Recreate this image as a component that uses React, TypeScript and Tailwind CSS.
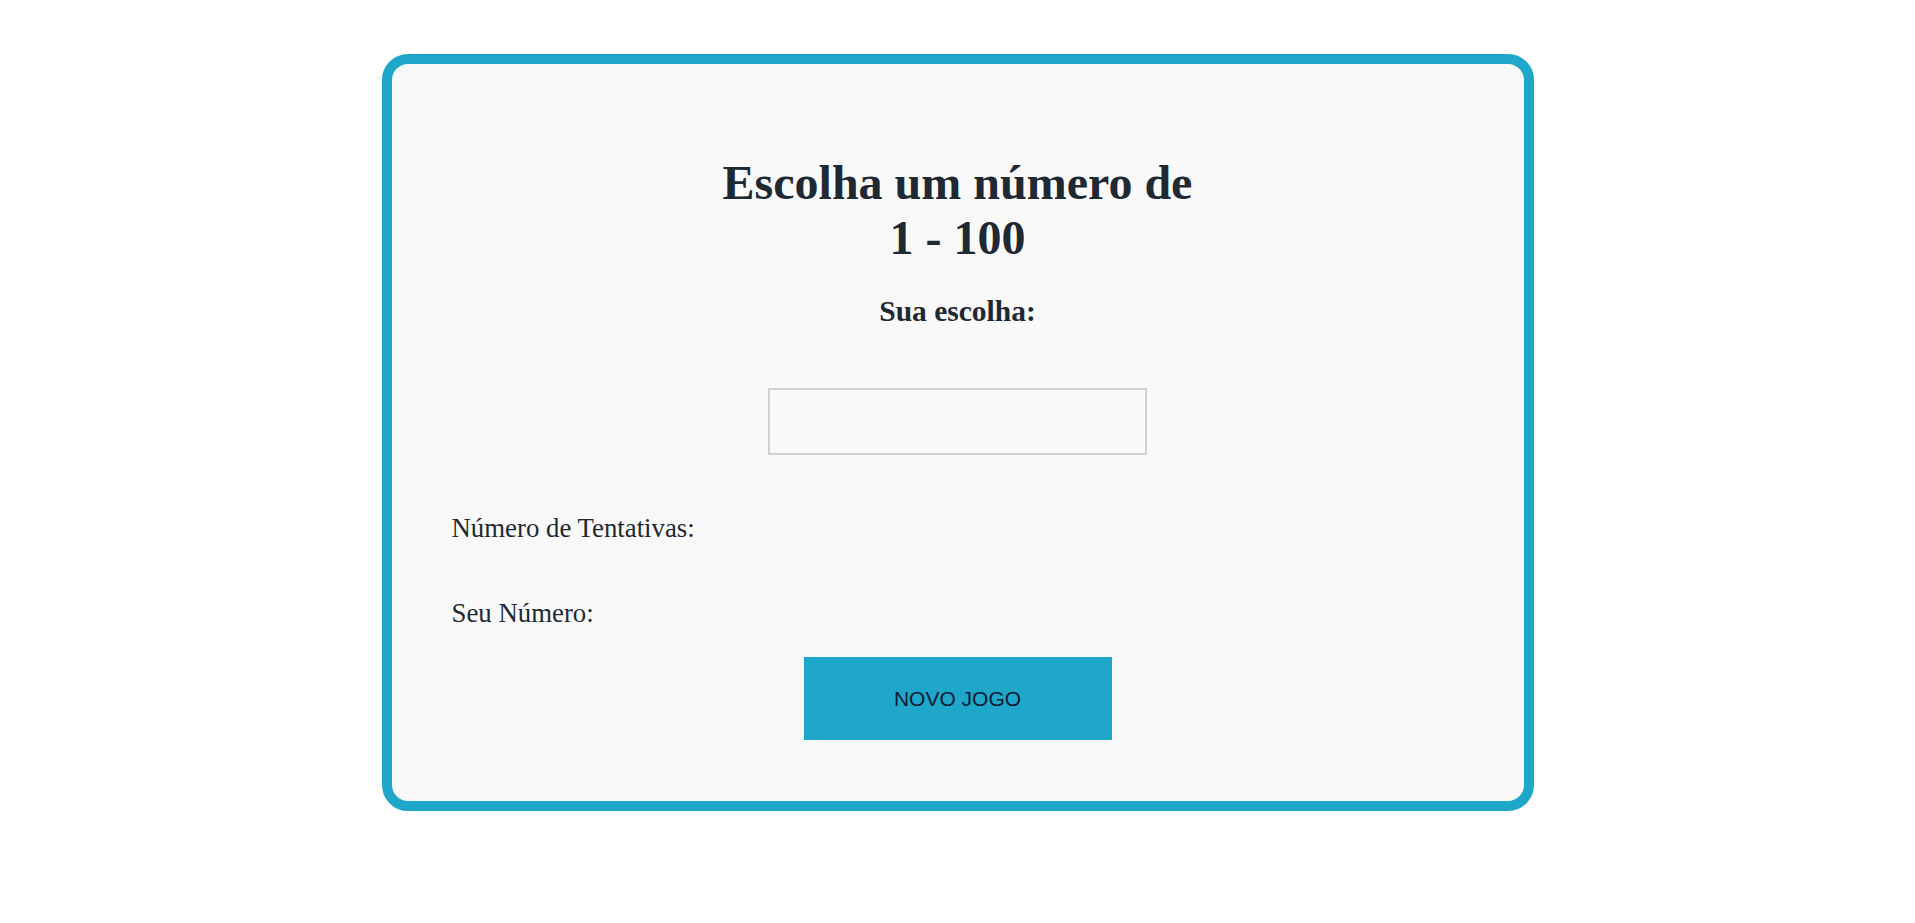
const App = () => {
  return (
    <div className="min-h-screen bg-white pt-[54px] font-['Liberation_Serif',serif]">
      <div className="mx-auto flex w-[1152px] flex-col rounded-[26px] border-[10px] border-[#1ea7c9] bg-[#f9f9f9] px-[60px] pt-[91px] pb-[61px] text-[#1f2933]">
        <h1 className="text-center text-[48px] font-bold leading-[1.15]">
          Escolha um número de
          <br />1 - 100
        </h1>
        <h2 className="mt-[30px] text-center text-[29.5px] font-bold leading-[1.15]">
          Sua escolha:
        </h2>
        <input
          type="text"
          className="mx-auto mt-[59px] h-[67px] w-[379px] border-2 border-[#d1d1d1] bg-transparent px-3 text-[24px] outline-none"
        />
        <p className="mt-[58px] text-[26.8px] leading-[1.15]">Número de Tentativas:</p>
        <p className="mt-[54px] text-[26.8px] leading-[1.15]">Seu Número:</p>
        <button className="mx-auto mt-[28px] h-[83px] w-[308px] bg-[#1ea7c9] font-['Liberation_Sans',sans-serif] text-[21px] text-[#0b1a33]">
          NOVO JOGO
        </button>
      </div>
    </div>
  );
};

export default App;
